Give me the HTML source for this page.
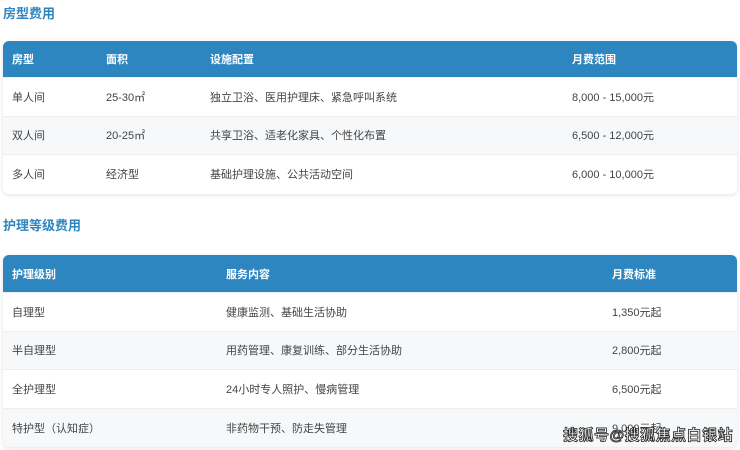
<!DOCTYPE html>
<html><head><meta charset="utf-8"><style>
*{margin:0;padding:0;box-sizing:border-box}
body{width:740px;height:450px;overflow:hidden;background:#fff;font-family:"Liberation Sans","Noto Sans CJK SC",sans-serif;color:#444;position:relative}
h2{position:absolute;left:3px;font-size:13px;font-weight:bold;color:#2e86c1}
.t{position:absolute;left:3px;width:734px;border-radius:6px;overflow:hidden;box-shadow:0 1px 4px rgba(0,0,0,.12);background:#fff}
.r{position:relative;height:38.5px;border-bottom:1px solid #eceef0;font-size:11px}
.r:last-child{border-bottom:none}
.r span{position:absolute;top:50%;transform:translateY(-50%)}
.h{background:#2e86c1;color:#fff;font-weight:bold;height:37px}
.a{background:#f6f8fa}
.wm{position:absolute;left:563px;top:424px;font-size:15px;font-weight:bold;color:#fff;-webkit-text-stroke:0.8px #222;letter-spacing:0.5px}
</style></head><body>
<h2 style="top:3px">房型费用</h2>
<div class="t" style="top:41px">
<div class="r h"><span style="left:9px">房型</span><span style="left:103px">面积</span><span style="left:207px">设施配置</span><span style="left:569px">月费范围</span></div>
<div class="r"><span style="left:9px">单人间</span><span style="left:103px">25-30㎡</span><span style="left:207px">独立卫浴、医用护理床、紧急呼叫系统</span><span style="left:569px">8,000 - 15,000元</span></div>
<div class="r a"><span style="left:9px">双人间</span><span style="left:103px">20-25㎡</span><span style="left:207px">共享卫浴、适老化家具、个性化布置</span><span style="left:569px">6,500 - 12,000元</span></div>
<div class="r"><span style="left:9px">多人间</span><span style="left:103px">经济型</span><span style="left:207px">基础护理设施、公共活动空间</span><span style="left:569px">6,000 - 10,000元</span></div>
</div>
<h2 style="top:215px">护理等级费用</h2>
<div class="t" style="top:255px">
<div class="r h" style="height:38px"><span style="left:9px">护理级别</span><span style="left:223px">服务内容</span><span style="left:609px">月费标准</span></div>
<div class="r"><span style="left:9px">自理型</span><span style="left:223px">健康监测、基础生活协助</span><span style="left:609px">1,350元起</span></div>
<div class="r a"><span style="left:9px">半自理型</span><span style="left:223px">用药管理、康复训练、部分生活协助</span><span style="left:609px">2,800元起</span></div>
<div class="r"><span style="left:9px">全护理型</span><span style="left:223px">24小时专人照护、慢病管理</span><span style="left:609px">6,500元起</span></div>
<div class="r a"><span style="left:9px">特护型（认知症）</span><span style="left:223px">非药物干预、防走失管理</span><span style="left:609px">9,000元起</span></div>
</div>
<div class="wm">搜狐号@搜狐焦点白银站</div>
</body></html>
